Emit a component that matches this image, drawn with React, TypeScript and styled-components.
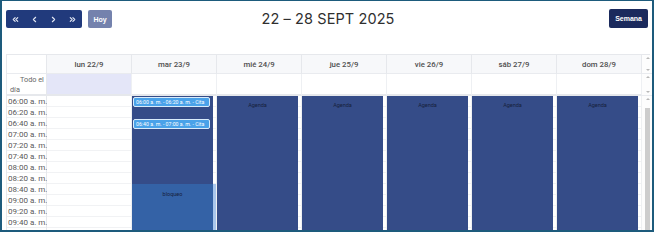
import styled, { createGlobalStyle } from "styled-components";
import { ChevronsLeft, ChevronLeft, ChevronRight, ChevronsRight } from "lucide-react";

const GlobalStyle = createGlobalStyle`
  html, body {
    margin: 0;
    padding: 0;
    background: #ffffff;
  }
  * { box-sizing: border-box; }
`

const Frame = styled.div`
  width: 654px;
  height: 232px;
  border: 2px solid #1d5b7c;
  border-top-width: 1px;
  padding: 0 2px 0 4px;
  overflow: hidden;
  font-family: Roboto, "Liberation Sans", sans-serif;
  background: #fff;
`

const Toolbar = styled.div`
  display: grid;
  grid-template-columns: 1fr auto 1fr;
  align-items: start;
  height: 28px;
  margin-top: 8px;
  margin-bottom: 17px;
`

const LeftTools = styled.div`
  display: flex;
  gap: 6px;
  align-items: center;
`

const NavGroup = styled.div`
  display: flex;
  background: #213a7c;
  border-radius: 2px;
  height: 18px;
  width: 76px;
  margin-top: 1px;
`

const NavButton = styled.button`
  flex: 1;
  border: none;
  background: transparent;
  color: #e4e8f4;
  display: flex;
  align-items: center;
  justify-content: center;
  padding: 0;
  cursor: pointer;
`

const ToolButton = styled.button<{ $muted?: boolean }>`
  height: ${p => (p.$muted ? "18px" : "19px")};
  padding: ${p => (p.$muted ? "0 5px" : "0 6px")};
  min-width: ${p => (p.$muted ? "24px" : "37px")};
  border: none;
  border-radius: 2px;
  background: ${p => (p.$muted ? "#7482ad" : "#1b2a5d")};
  color: #fff;
  font-family: "Liberation Sans", Arial, sans-serif;
  font-size: 7px;
  font-weight: bold;
  cursor: pointer;
  margin-top: ${p => (p.$muted ? "1px" : "0")};
`

const Title = styled.h2`
  margin: 0;
  font-size: 14.5px;
  line-height: 20px;
  font-weight: 400;
  color: #2f2f2f;
  letter-spacing: 0.1px;
  font-family: Inter, Roboto, sans-serif;
`

const RightTools = styled.div`
  display: flex;
  justify-content: flex-end;
  padding-right: 2px;
`

const Grid = styled.div`
  display: grid;
  grid-template-columns: 40px repeat(7, 85px) 11px;
  border-left: 1px solid #e6e8ec;
  border-top: 1px solid #e6e8ec;
`

const HeadCell = styled.div<{ $blank?: boolean }>`
  height: 19px;
  background: ${p => (p.$blank ? "#fff" : "#f7f8fa")};
  border-right: 1px solid #e6e8ec;
  border-bottom: 1px solid #e9ebef;
  display: flex;
  align-items: center;
  justify-content: center;
  font-size: 7.8px;
  font-weight: 500;
  color: #4f4f4f;
`

const AllDayLabel = styled.div`
  height: 22px;
  border-right: 1px solid #e6e8ec;
  border-bottom: 2px solid #e6e8ec;
  font-size: 7.3px;
  line-height: 10px;
  color: #666;
  padding: 1px 0 0 3px;
  text-indent: 10px;
`

const AllDayCell = styled.div<{ $today?: boolean }>`
  height: 22px;
  background: ${p => (p.$today ? "#e4e6f8" : "#fff")};
  border-right: 1px solid #eef0f3;
  border-bottom: 2px solid #e6e8ec;
`

const ScrollCol = styled.div<{ $h: number }>`
  height: ${p => p.$h}px;
  border-bottom: ${p => (p.$h < 50 ? "1px solid #e9ebef" : "none")};
  background: #fdfdfd;
  display: flex;
  flex-direction: column;
  align-items: center;
  justify-content: space-between;
  padding: 2px 0;
`

const Arrow = styled.span<{ $down?: boolean }>`
  width: 0;
  height: 0;
  border-left: 2px solid transparent;
  border-right: 2px solid transparent;
  ${p => (p.$down ? "border-top: 2px solid #b8b8b8;" : "border-bottom: 2px solid #b8b8b8;")}
`

const Thumb = styled.span`
  width: 5px;
  flex: 1;
  margin-top: 8px;
  background: #cdcdcd;
`

const TimeCol = styled.div`
  border-right: 1px solid #e6e8ec;
`

const TimeSlot = styled.div`
  height: 11px;
  border-bottom: 1px solid #eef0f2;
  font-size: 8px;
  line-height: 11px;
  color: #595959;
  padding-left: 1px;
  white-space: nowrap;
`

const DayCol = styled.div`
  position: relative;
  height: 136px;
  border-right: 1px solid #eef0f2;
  background: repeating-linear-gradient(
    to bottom,
    #fff 0,
    #fff 10px,
    #f1f2f4 10px,
    #f1f2f4 11px
  );
`

const Block = styled.div<{ $top: number; $height: number; $tone: "agenda" | "bloqueo" }>`
  position: absolute;
  left: 0;
  right: 3px;
  top: ${p => p.$top}px;
  height: ${p => p.$height}px;
  background: ${p => (p.$tone === "agenda" ? "#354c88" : "#3462a6")};
  font-size: 5.5px;
  color: #16213c;
  text-align: center;
  padding-top: ${p => (p.$tone === "agenda" ? "6px" : "7px")};
`

const Strip = styled.div<{ $top: number }>`
  position: absolute;
  right: 0;
  width: 3px;
  top: ${p => p.$top}px;
  bottom: 0;
  background: #a9c6ec;
`

const Cita = styled.div<{ $top: number }>`
  position: absolute;
  left: 1px;
  right: 6px;
  top: ${p => p.$top}px;
  height: 10px;
  background: #4aa2e9;
  border: 1px solid #d9ecfb;
  border-radius: 2px;
  color: #fff;
  font-size: 5.2px;
  line-height: 8px;
  padding-left: 2px;
  white-space: nowrap;
  overflow: hidden;
`

const days = ["lun 22/9", "mar 23/9", "mié 24/9", "jue 25/9", "vie 26/9", "sáb 27/9", "dom 28/9"];
const slots = ["06:00", "06:20", "06:40", "07:00", "07:20", "07:40", "08:00", "08:20", "08:40", "09:00", "09:20", "09:40"];

export default function App() {
  return (
    <>
      <GlobalStyle />
      <Frame>
        <Toolbar>
          <LeftTools>
            <NavGroup>
              <NavButton><ChevronsLeft size={9} strokeWidth={3} /></NavButton>
              <NavButton><ChevronLeft size={9} strokeWidth={3} /></NavButton>
              <NavButton><ChevronRight size={9} strokeWidth={3} /></NavButton>
              <NavButton><ChevronsRight size={9} strokeWidth={3} /></NavButton>
            </NavGroup>
            <ToolButton $muted>Hoy</ToolButton>
          </LeftTools>
          <Title>22 – 28 SEPT 2025</Title>
          <RightTools>
            <ToolButton>Semana</ToolButton>
          </RightTools>
        </Toolbar>

        <Grid>
          <HeadCell $blank />
          {days.map(d => <HeadCell key={d}>{d}</HeadCell>)}
          <ScrollCol $h={19}><Arrow /><Arrow $down /></ScrollCol>

          <AllDayLabel>Todo el día</AllDayLabel>
          {days.map((d, i) => <AllDayCell key={d} $today={i === 0} />)}
          <ScrollCol $h={22}><Arrow /><Arrow $down /></ScrollCol>

          <TimeCol>
            {slots.map(s => <TimeSlot key={s}>{s} a. m.</TimeSlot>)}
          </TimeCol>
          <DayCol />
          <DayCol>
            <Block $top={0} $height={88} $tone="agenda" />
            <Block $top={88} $height={60} $tone="bloqueo">bloqueo</Block>
            <Strip $top={88} />
            <Cita $top={1}>06:00 a. m. - 06:20 a. m. - Cita</Cita>
            <Cita $top={23}>06:40 a. m. - 07:00 a. m. - Cita</Cita>
          </DayCol>
          {days.slice(2).map(d => (
            <DayCol key={d}>
              <Block $top={0} $height={150} $tone="agenda">Agenda</Block>
            </DayCol>
          ))}
          <ScrollCol $h={136}><Arrow /><Thumb /></ScrollCol>
        </Grid>
      </Frame>
    </>
  );
}
